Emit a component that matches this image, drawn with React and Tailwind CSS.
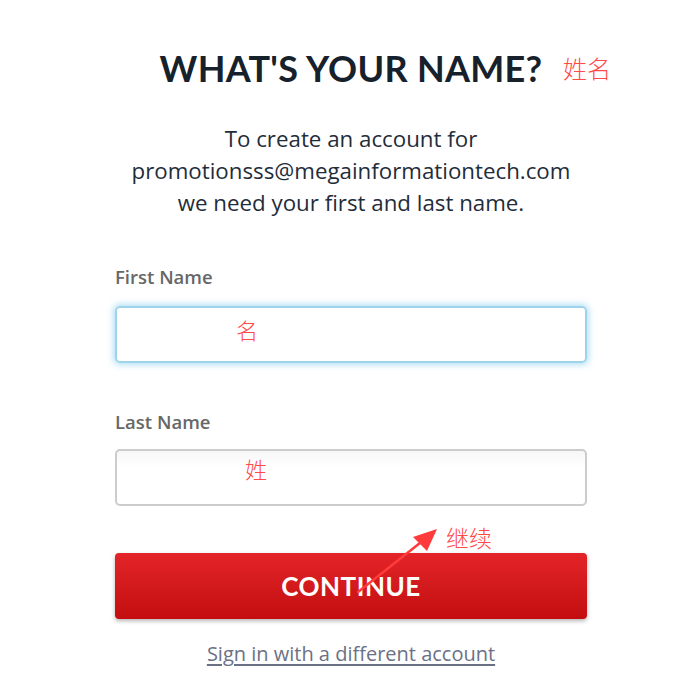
export default function App() {
  return (
    <div className="w-[695px] h-[681px] bg-white overflow-hidden font-['Open_Sans','Noto_Sans_CJK_SC',sans-serif]">
      <div className="ml-[115px] w-[472px] flex flex-col items-stretch">
        <div className="relative mt-[46px] h-[44px] flex justify-center">
          <h1 className="font-['Lato'] text-[36px] font-bold leading-[44px] tracking-[0.3px] text-[#17212b]">WHAT'S YOUR NAME?</h1>
          <span className="absolute left-[448px] top-[7px] whitespace-nowrap text-[24px] leading-[30px] text-[#ff4a4a] font-['Noto_Sans_CJK_SC'] font-light">姓名</span>
        </div>
        <p className="mt-[33px] text-center text-[22.3px] leading-[32px] text-[#1f2d3a] w-[560px] -ml-[44px]">
          To create an account for<br />
          promotionsss@megainformationtech.com<br />
          we need your first and last name.
        </p>
        <label className="mt-[46px] text-[18.5px] leading-[24px] font-semibold text-[#676767]">First Name</label>
        <div className="mt-[17px] h-[57px] rounded-[5px] border-2 border-[#9fd3ea] shadow-[0_0_6px_2px_rgba(120,200,240,0.55)] flex items-start">
          <span className="ml-[119px] mt-[8px] text-[22px] leading-[26px] text-[#ff4a4a] font-['Noto_Sans_CJK_SC'] font-light">名</span>
        </div>
        <label className="mt-[47px] text-[18.5px] leading-[24px] font-semibold text-[#676767]">Last Name</label>
        <div className="mt-[15px] h-[57px] rounded-[5px] border-2 border-[#cccccc] bg-gradient-to-b from-[#f7f7f7] to-white to-[30%] flex items-start">
          <span className="ml-[128px] mt-[4px] text-[22px] leading-[26px] text-[#ff4a4a] font-['Noto_Sans_CJK_SC'] font-light">姓</span>
        </div>
        <div className="relative mt-[47px]">
          <button className="w-full h-[66px] rounded-[4px] bg-gradient-to-b from-[#e32428] to-[#c30d0e] shadow-[0_2px_4px_rgba(0,0,0,0.3)] text-white text-[26px] font-['Lato'] font-bold tracking-[0.5px]">
            CONTINUE
          </button>
          <svg className="absolute left-[240px] top-[-26px]" width="86" height="70" viewBox="0 0 86 70">
            <line x1="3" y1="65" x2="70" y2="12" stroke="#ff3b3b" strokeWidth="2.5" strokeLinecap="round" />
            <polygon points="82,2 58,10 72,24" fill="#ff3b3b" />
          </svg>
          <span className="absolute left-[331px] top-[-30px] whitespace-nowrap text-[23px] leading-[28px] text-[#ff4a4a] font-['Noto_Sans_CJK_SC'] font-light">继续</span>
        </div>
        <a className="mt-[22px] self-center text-[20px] leading-[26px] text-[#6b7185] underline underline-offset-[3px] decoration-[1.5px]">
          Sign in with a different account
        </a>
      </div>
    </div>
  )
}
